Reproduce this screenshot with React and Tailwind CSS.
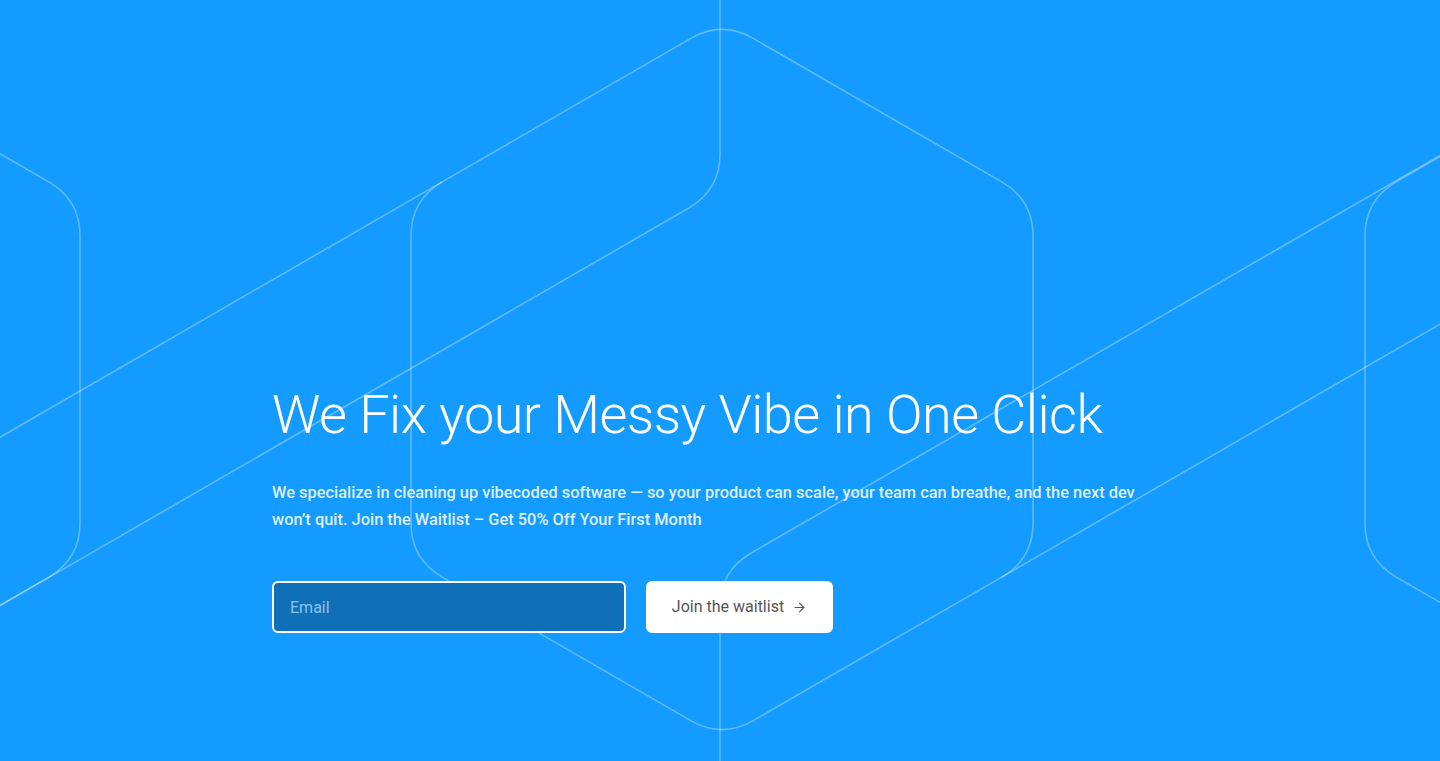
import { ArrowRight } from "lucide-react";

const S = 0.57735;

// rounded polyline: rounds every interior vertex (or every vertex when closed)
const roundPath = (pts, t, closed) => {
  const n = pts.length;
  const unit = (a, b) => {
    const dx = b[0] - a[0];
    const dy = b[1] - a[1];
    const l = Math.hypot(dx, dy);
    return [dx / l, dy / l];
  };
  const cut = (i) => {
    const v = pts[i];
    const p = pts[(i - 1 + n) % n];
    const q = pts[(i + 1) % n];
    const u1 = unit(v, p);
    const u2 = unit(v, q);
    return [
      [v[0] + u1[0] * t, v[1] + u1[1] * t],
      [v[0] + u2[0] * t, v[1] + u2[1] * t],
    ];
  };
  const f = (p) => `${p[0].toFixed(1)} ${p[1].toFixed(1)}`;
  let d = "";
  if (closed) {
    const c0 = cut(0);
    d = `M ${f(c0[1])}`;
    for (let k = 1; k <= n; k++) {
      const i = k % n;
      const [a, b] = cut(i);
      d += ` L ${f(a)} Q ${f(pts[i])} ${f(b)}`;
    }
    return d + " Z";
  }
  d = `M ${f(pts[0])}`;
  for (let i = 1; i < n - 1; i++) {
    const [a, b] = cut(i);
    d += ` L ${f(a)} Q ${f(pts[i])} ${f(b)}`;
  }
  return d + ` L ${f(pts[n - 1])}`;
};

const hex = (cx, cy, hw) => {
  const r = hw / 0.866025;
  return [
    [cx, cy - r],
    [cx + hw, cy - r / 2],
    [cx + hw, cy + r / 2],
    [cx, cy + r],
    [cx - hw, cy + r / 2],
    [cx - hw, cy - r / 2],
  ];
};

const Pattern = () => {
  const cy = 379.5;
  const hw = 311;
  const h1 = hex(722, cy, hw);
  const h0 = hex(80 - hw, cy, hw);
  const h2 = hex(1365 + hw, cy, hw);
  const t = 36;
  const ul = h1[5];
  const lr = h1[2];
  // carry the straight edges a bit past the corner so they run into the hex sides
  const ulEnd = [ul[0] + t * 0.866, ul[1] - t * 0.5];
  const lrEnd = [lr[0] - t * 0.866, lr[1] + t * 0.5];
  return (
    <svg
      className="absolute inset-0 h-full w-full"
      viewBox="0 0 1440 761"
      preserveAspectRatio="xMidYMid slice"
      fill="none"
      stroke="white"
      strokeOpacity="0.32"
      strokeWidth="1.6"
    >
      <path d={roundPath(h0, t, true)} />
      <path d={roundPath(h1, t, true)} />
      <path d={roundPath(h2, t, true)} />
      <path d={`M -10 ${(ul[1] + (ul[0] + 10) * S).toFixed(1)} L ${ulEnd[0].toFixed(1)} ${ulEnd[1].toFixed(1)}`} />
      <path d={`M ${lrEnd[0].toFixed(1)} ${lrEnd[1].toFixed(1)} L 1450 ${(lr[1] - (1450 - lr[0]) * S).toFixed(1)}`} />
      <path d={roundPath([[720, -10], [720, 190], [-100, 190 + 820 * S]], t, false)} />
      <path d={roundPath([[720, 771], [720, 571], [1540, 571 - 820 * S]], t, false)} />
    </svg>
  );
};

export default function App() {
  return (
    <div
      className="relative h-[761px] w-full overflow-hidden bg-[#149bff]"
      style={{ fontFamily: "Roboto, 'Liberation Sans', sans-serif" }}
    >
      <Pattern />
      <div className="relative mx-auto flex max-w-4xl flex-col pt-[381px]">
        <h1 className="text-[54px] font-light leading-[68px] tracking-[-0.5px] text-white">
          We Fix your Messy Vibe in One Click
        </h1>
        <p className="mt-[30px] text-[16.4px] font-medium leading-[27px] text-[#dcefff]">
          We specialize in cleaning up vibecoded software — so your product can scale, your team can breathe, and the next dev
          <br />
          won’t quit. Join the Waitlist – Get 50% Off Your First Month
        </p>
        <form className="mt-[48px] flex gap-5" onSubmit={(e) => e.preventDefault()}>
          <input
            type="email"
            placeholder="Email"
            className="h-[52px] w-[354px] rounded-md border-2 border-white bg-[#0f70b8] px-4 text-[16px] text-white outline-none placeholder:text-[#8cc3ec]"
          />
          <button
            type="submit"
            className="flex h-[52px] w-[187px] items-center justify-center gap-2 rounded-md bg-white text-[16px] text-[#555]"
          >
            Join the waitlist
            <ArrowRight size={15} strokeWidth={1.75} />
          </button>
        </form>
      </div>
    </div>
  );
}
